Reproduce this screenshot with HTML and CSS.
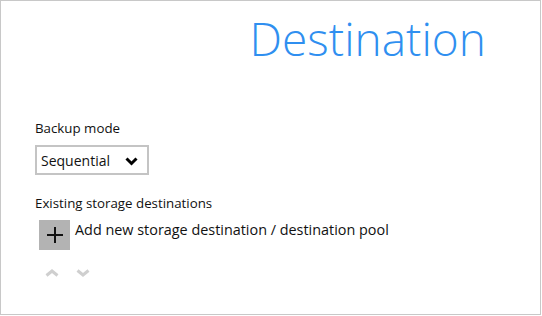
FILE: index.html
```html
<!DOCTYPE html>
<html lang="en">
<head>
    <meta charset="UTF-8">
    <title>Destination</title>
    <link rel="stylesheet" href="styles.css">
</head>
<body>
    <div class="panel">
        <h1 class="titulo">Destination</h1>

        <div class="campo">
            <label class="etiqueta">Backup mode</label>
            <div class="selector">
                <span>Sequential</span>
                <svg class="flecha" width="13" height="9" viewBox="0 0 13 9">
                    <path d="M1.5 1.5 L6.5 6.5 L11.5 1.5" fill="none" stroke="#000" stroke-width="3"/>
                </svg>
            </div>
        </div>

        <div class="campo">
            <label class="etiqueta">Existing storage destinations</label>
            <div class="agregar">
                <div class="boton-mas">
                    <svg width="16" height="16" viewBox="0 0 16 16">
                        <path d="M8 0 V16 M0 8 H16" stroke="#111" stroke-width="2"/>
                    </svg>
                </div>
                <span>Add new storage destination / destination pool</span>
            </div>
            <div class="orden">
                <svg width="14" height="8" viewBox="0 0 14 8">
                    <path d="M1.5 6.5 L7 2 L12.5 6.5" fill="none" stroke="#cfcfcf" stroke-width="3"/>
                </svg>
                <svg width="14" height="8" viewBox="0 0 14 8">
                    <path d="M1.5 1.5 L7 6 L12.5 1.5" fill="none" stroke="#cfcfcf" stroke-width="3"/>
                </svg>
            </div>
        </div>
    </div>
</body>
</html>
```

FILE: styles.css
```css
body {
    margin: 0;
    font-family: "Open Sans", "Noto Sans", sans-serif;
    color: #111;
}

.panel {
    width: 541px;
    height: 315px;
    box-sizing: border-box;
    border: 1px solid #c8c8c8;
    padding: 0 34px;
}

.titulo {
    margin: 5px 20px 0 0;
    text-align: right;
    font-size: 46px;
    font-weight: 300;
    line-height: 64px;
    color: #2f8ff0;
}

.campo {
    margin-top: 49px;
}

.campo + .campo {
    margin-top: 19px;
}

.etiqueta {
    display: block;
    font-size: 13.3px;
    line-height: 18px;
    margin-bottom: 8px;
}

.selector {
    width: 114px;
    height: 30px;
    box-sizing: border-box;
    border: 2px solid #c4c4c4;
    display: flex;
    align-items: center;
    justify-content: space-between;
    padding: 0 9px 0 4px;
    font-size: 14px;
}

.flecha {
    margin-top: 2px;
}

.agregar {
    display: flex;
    align-items: flex-start;
    gap: 5px;
    margin: 3px 0 0 4px;
    font-size: 14.4px;
    line-height: 19px;
}

.boton-mas {
    width: 31px;
    height: 30px;
    background-color: #b3b3b3;
    display: flex;
    align-items: center;
    justify-content: center;
}

.orden {
    display: flex;
    gap: 17px;
    margin: 19px 0 0 10px;
}
```
